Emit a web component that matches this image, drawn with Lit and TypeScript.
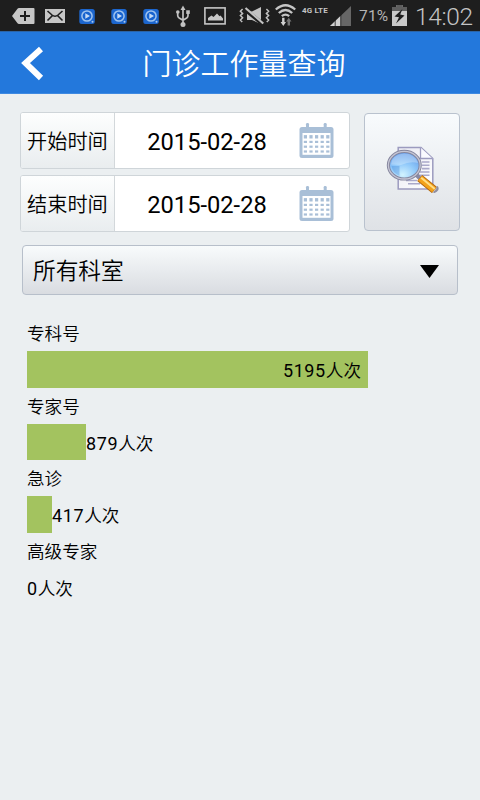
import { LitElement, html, css, svg } from "lit";
import { customElement, property, state } from "lit/decorators.js";

interface Row {
  label: string;
  count: number;
  width: number;
}

@customElement("status-bar")
class StatusBar extends LitElement {
  static styles = css`
    :host {
      display: grid;
      grid-template-columns: 33px 34px 32px 32px 33px 28px 35px 36px 27px 28px 29px 33px 24px 1fr;
      height: 31px;
      padding-left: 12px;
      background: #1e1e1e;
      color: #c4c4c4;
      font-family: Roboto, sans-serif;
      overflow: hidden;
    }
    svg { display: block; width: 100%; height: 31px; overflow: visible; }
    .net { font-size: 8px; font-weight: 700; line-height: 9px; padding-top: 6px; white-space: nowrap; letter-spacing: 0.15px; }
    .pct { font-size: 15.5px; line-height: 33px; white-space: nowrap; font-weight: 400; color: #b4b4b4; letter-spacing: 0.2px; }
    .clock { font-size: 24.5px; line-height: 33px; font-weight: 300; white-space: nowrap; letter-spacing: -0.35px; margin-left: -1px; }
  `;

  private app() {
    return svg`<svg viewBox="0 0 32 31" preserveAspectRatio="xMinYMid">
      <rect x="0.3" y="9" width="15.5" height="15" rx="2.5" fill="#1c66ce"/>
      <circle cx="8" cy="16" r="5.1" fill="#1763cf" stroke="#9fc3ee" stroke-width="1.5"/>
      <path d="M6.3 13.2 11 16 6.3 18.8Z" fill="#c6dbf4"/>
      <circle cx="13.5" cy="21.7" r="1" fill="#a9c8ef"/>
    </svg>`;
  }

  render() {
    return html`
      <svg viewBox="0 0 33 31">
        <path d="M0 16 5.5 8.8Q6 8 7 8H21.5Q22.5 8 22.5 9V23Q22.5 24 21.5 24H7Q6 24 5.5 23.2Z" fill="#c6c6c6"/>
        <path d="M8 16H18M13 11V21" stroke="#1e1e1e" stroke-width="2"/>
      </svg>
      <svg viewBox="0 0 34 31">
        <rect x="0" y="9" width="20" height="14" fill="#c6c6c6"/>
        <path d="M2.5 11 7 15Q10 17.4 13 15L17.5 11M2.5 20.5 7.5 15.5M17.5 20.5 12.5 15.5" fill="none" stroke="#1e1e1e" stroke-width="1.6"/>
      </svg>
      ${this.app()}${this.app()}${this.app()}
      <svg viewBox="0 0 28 31">
        <path d="M7 9V24M1.7 12V15.5Q1.7 17 3.2 18L7 20.3M12 12V15.5Q12 17 10.7 18L7 20.3" fill="none" stroke="#c2c2c2" stroke-width="1.7"/>
        <path d="M4.5 10 7 5.5 9.5 10Z" fill="#c2c2c2"/>
        <circle cx="7" cy="24.4" r="2.5" fill="#c2c2c2"/>
        <circle cx="1.8" cy="12" r="1.8" fill="#c2c2c2"/>
        <rect x="10.2" y="10.3" width="3.6" height="3.6" fill="#c2c2c2"/>
      </svg>
      <svg viewBox="0 0 35 31">
        <rect x="0.9" y="7.9" width="20.2" height="16" fill="none" stroke="#c6c6c6" stroke-width="1.6"/>
        <path d="M4 20.5V18L7.5 15.5 9.5 17 13 13.5 15.5 16.2 16.5 15.5 19 18.5V20.5Z" fill="#c6c6c6"/>
      </svg>
      <svg viewBox="0 0 36 31">
        <path d="M3.6 9 1.4 11.2 3.6 13.4 1.4 15.6 3.6 17.8 1.4 20 3.2 22M27.4 9 29.6 11.2 27.4 13.4 29.6 15.6 27.4 17.8 29.6 20 27.8 22" fill="none" stroke="#c2c2c2" stroke-width="1.5"/>
        <path d="M8 11.5H13L22 7V24L13 20H8Z" fill="#c2c2c2"/>
        <path d="M5.5 9.2 24 24.2" stroke="#1e1e1e" stroke-width="4"/>
        <path d="M6.5 8 24.3 23.5" stroke="#c2c2c2" stroke-width="2.2"/>
      </svg>
      <svg viewBox="0 0 27 31">
        <path d="M0.8 9.5Q10.5 1 20.2 9.5M3.8 13Q10.5 7 17.2 13M6.8 16.2Q10.5 13 14.2 16.2" fill="none" stroke="#c6c6c6" stroke-width="2.3"/>
        <path d="M7.1 17.8H9.5V22H11L8.3 26 5.6 22H7.1Z" fill="#d0d0d0"/>
        <path d="M12.6 25.5H15V21.5H16.5L13.8 17.8 11.1 21.5H12.6Z" fill="#757575"/>
      </svg>
      <span class="net">4G LTE</span>
      <svg viewBox="0 0 29 31">
        <path d="M0 26 21 6V26Z" fill="#666"/>
        <path d="M0 26 10.5 16V26Z" fill="#d0d0d0"/>
        <path d="M5.2 17V26M10.8 14V26" stroke="#1e1e1e" stroke-width="0.8"/>
      </svg>
      <span class="pct">71%</span>
      <svg viewBox="0 0 24 31">
        <path d="M0 7H4.5V5H10.5V7H15V26H0Z" fill="#c9c9c9"/>
        <path d="M0 7H4.5V5H10.5V7H15V11H0Z" fill="#5e5e5e"/>
        <path d="M10.5 9 2.5 16.5 7 17.2 4 23.5 12.5 15.5 8.2 14.5Z" fill="#1e1e1e"/>
      </svg>
      <span class="clock">14:02</span>
    `;
  }
}

@customElement("date-field")
class DateField extends LitElement {
  @property() label = "";
  @property() value = "";

  static styles = css`
    :host {
      display: flex;
      box-sizing: border-box;
      height: 57px;
      border: 1px solid #cfd5d9;
      border-radius: 3px;
      background: #fff;
      overflow: hidden;
      color: #000;
    }
    .label {
      width: 94px;
      box-sizing: border-box;
      border-right: 1px solid #d3d8db;
      background: linear-gradient(#fdfefe, #e9edef);
      font-size: 20.2px;
      line-height: 56px;
      padding-left: 6px;
      white-space: nowrap;
    }
    .value {
      width: 184px;
      text-align: center;
      font: 23.7px/59px Roboto, sans-serif;
    }
    .cal { display: block; width: 36px; height: 36px; margin-top: 10px; }
  `;

  render() {
    const cells = [];
    for (let r = 0; r < 4; r++)
      for (let c = 0; c < 5; c++)
        cells.push(svg`<rect x=${4.8 + c * 5.6} y=${r === 0 ? 12.1 : 13 + r * 4.8} width="3.2" height=${r === 0 ? 3.4 : 2.2}/>`);
    return html`
      <span class="label">${this.label}</span>
      <span class="value">${this.value}</span>
      <svg class="cal" viewBox="0 0 36 36" fill="#a9bfd7">
        <rect x="0.5" y="4" width="34" height="31" rx="2.5"/>
        <rect x="7" y="0" width="3" height="6" rx="1.2"/>
        <rect x="24.7" y="0" width="3" height="6" rx="1.2"/>
        <rect x="3.5" y="10" width="28" height="21.8" fill="#fff"/>
        ${cells}
      </svg>`;
  }
}

@customElement("app-root")
class AppRoot extends LitElement {
  @state() private rows: Row[] = [
    { label: "专科号", count: 5195, width: 341 },
    { label: "专家号", count: 879, width: 59 },
    { label: "急诊", count: 417, width: 25 },
    { label: "高级专家", count: 0, width: 0 },
  ];

  static styles = css`
    :host {
      display: block;
      height: 800px;
      background: #ebeff1;
      color: #000;
      font-family: "Noto Sans CJK SC", sans-serif;
      font-weight: 350;
      overflow: hidden;
    }
    .header {
      display: grid;
      grid-template-columns: 64px 1fr 56px;
      height: 63px;
      box-sizing: border-box;
      background: #2378dc;
      border-top: 1px solid #2b64a6;
      border-bottom: 1px solid #3e89e1;
      color: #fff;
    }
    .back { display: block; width: 64px; height: 61px; }
    .title { margin: 0; text-align: center; font-size: 29px; line-height: 60px; font-weight: 350; }
    .query { display: grid; grid-template-columns: 330px 96px; column-gap: 14px; padding: 18px 20px 0; }
    .dates { display: flex; flex-direction: column; gap: 6px; }
    .search {
      box-sizing: border-box;
      height: 118px;
      margin-top: 1px;
      padding: 0 0 9px 1px;
      display: flex;
      align-items: center;
      justify-content: center;
      border: 1.5px solid #b9c2ce;
      border-radius: 4px;
      background: linear-gradient(#f8fbfd, #dfe2e6);
    }
    .search svg { display: block; width: 54px; height: 50px; }
    .select {
      display: flex;
      align-items: center;
      justify-content: space-between;
      box-sizing: border-box;
      height: 50px;
      margin: 13px 22px 0;
      padding: 0 18px 0 10px;
      border: 1.5px solid #b7bfca;
      border-radius: 4px;
      background: linear-gradient(#f8fbfc, #d9dce1);
      font-size: 22.7px;
    }
    .select span { margin-top: -2px; }
    .select svg { display: block; width: 19px; height: 13px; margin-top: 3px; }
    .chart { padding: 20px 27px 0; font-size: 17.6px; }
    .name { height: 36px; line-height: 36px; }
    .line { display: flex; height: 36.5px; line-height: 37px; white-space: nowrap; }
    .bar { background: #a3c35f; text-align: right; box-sizing: border-box; }
    .bar.full { padding-right: 7px; }
    .num { font-family: Roboto, "Noto Sans CJK SC", sans-serif; font-size: 18px; font-weight: 400; letter-spacing: 0.6px; }
    .unit { font-size: 17.6px; }
  `;

  private amount(n: number) {
    return html`<span class="num">${n}</span><span class="unit">人次</span>`;
  }

  render() {
    return html`
      <status-bar></status-bar>
      <div class="header">
        <svg class="back" viewBox="0 0 64 61"><path d="M41 17 25.5 31 41 46" fill="none" stroke="#fff" stroke-width="6"/></svg>
        <h1 class="title">门诊工作量查询</h1>
      </div>
      <div class="query">
        <div class="dates">
          <date-field label="开始时间" value="2015-02-28"></date-field>
          <date-field label="结束时间" value="2015-02-28"></date-field>
        </div>
        <button class="search" aria-label="查询">
          <svg viewBox="0 0 54 50">
            <defs>
              <radialGradient id="lens" cx="0.45" cy="0.85" r="0.85">
                <stop offset="0" stop-color="#d2f3ff"/>
                <stop offset="0.5" stop-color="#8fc8fa"/>
                <stop offset="1" stop-color="#6097e6"/>
              </radialGradient>
              <linearGradient id="sheet" x1="0" y1="0" x2="1" y2="1">
                <stop offset="0" stop-color="#e9e9f2"/>
                <stop offset="1" stop-color="#fff"/>
              </linearGradient>
            </defs>
            <path d="M12.2 4.5H35L46.8 15.5V46H12.2Z" fill="url(#sheet)" stroke="#9c9bbf" stroke-width="1.5"/>
            <path d="M34.5 4.5V15.5H46.5" fill="#fafaff" stroke="#9c9bbf" stroke-width="1.3"/>
            <path d="M36 19H43.5M36 22.3H43.5M36 25.6H43.5M34 29H43.5M32 32.3H43.5M20 37.5H31M22 40.8H34" stroke="#aaa9ca" stroke-width="1.6"/>
            <path d="M29.5 31 34 35.5" stroke="#8889a4" stroke-width="4"/>
            <path d="M33.7 35 48.5 47" stroke="#b0640f" stroke-width="8"/>
            <path d="M34 35.2 48.2 46.8" stroke="#f3a21b" stroke-width="6.2"/>
            <path d="M35.2 34.8 48.8 45.9" stroke="#ffdf86" stroke-width="2"/>
            <path d="M51 43.5Q53.5 47 47.5 49.5" fill="#a8a7b5" stroke="#8f8e9f" stroke-width="1.8"/>
            <ellipse cx="18.3" cy="22.2" rx="15.9" ry="13.8" fill="url(#lens)" stroke="#85869e" stroke-width="3.2"/>
            <ellipse cx="18.3" cy="22.2" rx="15.9" ry="13.8" fill="none" stroke="#c4c5d4" stroke-width="1.3"/>
            <path d="M5 21.5Q6 11.5 18 10.5Q29 10.5 32 20Q24 18 15 22Z" fill="#fff" opacity="0.28"/>
            <path d="M5.5 23H13.5V33Q6.5 30 5.5 23Z" fill="#3d83d8" opacity="0.35"/>
          </svg>
        </button>
      </div>
      <div class="select">
        <span>所有科室</span>
        <svg viewBox="0 0 19 13"><path d="M0 0H19L9.5 13Z" fill="#000"/></svg>
      </div>
      <div class="chart">
        ${this.rows.map((r) => {
          const inside = r.width > 120;
          return html`
            <div class="name">${r.label}</div>
            <div class="line">
              <div class="bar ${inside ? "full" : ""}" style="width:${r.width}px">${inside ? this.amount(r.count) : ""}</div>
              ${inside ? "" : html`<div>${this.amount(r.count)}</div>`}
            </div>`;
        })}
      </div>
    `;
  }
}
